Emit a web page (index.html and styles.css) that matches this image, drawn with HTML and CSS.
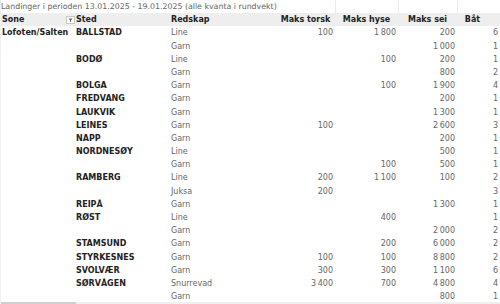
FILE: index.html
```html
<!DOCTYPE html>
<html lang="no">
<head>
<meta charset="utf-8">
<link rel="stylesheet" href="styles.css">
</head>
<body>
<div class="sheet">
  <div class="row title-row">
    <div class="cell title">Landinger i perioden 13.01.2025 - 19.01.2025 (alle kvanta i rundvekt)</div>
    <div class="cell sep"></div>
    <div class="cell sep"></div>
    <div class="cell sep"></div>
  </div>
  <div class="row head">
    <div class="cell h-sone">Sone <span class="filter"><svg width="9" height="8" viewBox="0 0 9 8"><rect x="0.5" y="0.5" width="8" height="7" fill="#fff" stroke="#c8c8c8"/><path d="M2.5 2.5h4L5 4.2V6.3L4 5.6V4.2z" fill="#666"/></svg></span></div>
    <div class="cell">Sted</div>
    <div class="cell">Redskap</div>
    <div class="cell c">Maks torsk</div>
    <div class="cell c">Maks hyse</div>
    <div class="cell c">Maks sei</div>
    <div class="cell c boat-h">Båt</div>
  </div>

  <div class="row"><div class="cell b">Lofoten/Salten</div><div class="cell b">BALLSTAD</div><div class="cell g">Line</div><div class="cell n">100</div><div class="cell n">1&#8239;800</div><div class="cell n">200</div><div class="cell n">6</div></div>
  <div class="row"><div class="cell"></div><div class="cell"></div><div class="cell g">Garn</div><div class="cell n"></div><div class="cell n"></div><div class="cell n">1&#8239;000</div><div class="cell n">1</div></div>
  <div class="row"><div class="cell"></div><div class="cell b">BODØ</div><div class="cell g">Line</div><div class="cell n"></div><div class="cell n">100</div><div class="cell n">200</div><div class="cell n">1</div></div>
  <div class="row"><div class="cell"></div><div class="cell"></div><div class="cell g">Garn</div><div class="cell n"></div><div class="cell n"></div><div class="cell n">800</div><div class="cell n">2</div></div>
  <div class="row"><div class="cell"></div><div class="cell b">BOLGA</div><div class="cell g">Garn</div><div class="cell n"></div><div class="cell n">100</div><div class="cell n">1&#8239;900</div><div class="cell n">4</div></div>
  <div class="row"><div class="cell"></div><div class="cell b">FREDVANG</div><div class="cell g">Garn</div><div class="cell n"></div><div class="cell n"></div><div class="cell n">200</div><div class="cell n">1</div></div>
  <div class="row"><div class="cell"></div><div class="cell b">LAUKVIK</div><div class="cell g">Garn</div><div class="cell n"></div><div class="cell n"></div><div class="cell n">1&#8239;300</div><div class="cell n">1</div></div>
  <div class="row"><div class="cell"></div><div class="cell b">LEINES</div><div class="cell g">Garn</div><div class="cell n">100</div><div class="cell n"></div><div class="cell n">2&#8239;600</div><div class="cell n">3</div></div>
  <div class="row"><div class="cell"></div><div class="cell b">NAPP</div><div class="cell g">Garn</div><div class="cell n"></div><div class="cell n"></div><div class="cell n">200</div><div class="cell n">1</div></div>
  <div class="row"><div class="cell"></div><div class="cell b">NORDNESØY</div><div class="cell g">Line</div><div class="cell n"></div><div class="cell n"></div><div class="cell n">500</div><div class="cell n">1</div></div>
  <div class="row"><div class="cell"></div><div class="cell"></div><div class="cell g">Garn</div><div class="cell n"></div><div class="cell n">100</div><div class="cell n">500</div><div class="cell n">1</div></div>
  <div class="row"><div class="cell"></div><div class="cell b">RAMBERG</div><div class="cell g">Line</div><div class="cell n">200</div><div class="cell n">1&#8239;100</div><div class="cell n">100</div><div class="cell n">2</div></div>
  <div class="row"><div class="cell"></div><div class="cell"></div><div class="cell g">Juksa</div><div class="cell n">200</div><div class="cell n"></div><div class="cell n"></div><div class="cell n">3</div></div>
  <div class="row"><div class="cell"></div><div class="cell b">REIPÅ</div><div class="cell g">Garn</div><div class="cell n"></div><div class="cell n"></div><div class="cell n">1&#8239;300</div><div class="cell n">1</div></div>
  <div class="row"><div class="cell"></div><div class="cell b">RØST</div><div class="cell g">Line</div><div class="cell n"></div><div class="cell n">400</div><div class="cell n"></div><div class="cell n">1</div></div>
  <div class="row"><div class="cell"></div><div class="cell"></div><div class="cell g">Garn</div><div class="cell n"></div><div class="cell n"></div><div class="cell n">2&#8239;000</div><div class="cell n">2</div></div>
  <div class="row"><div class="cell"></div><div class="cell b">STAMSUND</div><div class="cell g">Garn</div><div class="cell n"></div><div class="cell n">200</div><div class="cell n">6&#8239;000</div><div class="cell n">2</div></div>
  <div class="row"><div class="cell"></div><div class="cell b">STYRKESNES</div><div class="cell g">Garn</div><div class="cell n">100</div><div class="cell n">100</div><div class="cell n">8&#8239;800</div><div class="cell n">2</div></div>
  <div class="row"><div class="cell"></div><div class="cell b">SVOLVÆR</div><div class="cell g">Garn</div><div class="cell n">300</div><div class="cell n">300</div><div class="cell n">1&#8239;100</div><div class="cell n">6</div></div>
  <div class="row"><div class="cell"></div><div class="cell b">SØRVÅGEN</div><div class="cell g">Snurrevad</div><div class="cell n">3&#8239;400</div><div class="cell n">700</div><div class="cell n">4&#8239;800</div><div class="cell n">4</div></div>
  <div class="row"><div class="cell"></div><div class="cell"></div><div class="cell g">Garn</div><div class="cell n"></div><div class="cell n"></div><div class="cell n">800</div><div class="cell n">1</div></div>

  <div class="hscroll"><div class="thumb"></div></div>
</div>
</body>
</html>
```

FILE: styles.css
```css
html, body {
  margin: 0;
  padding: 0;
  background: #fff;
}
body {
  width: 500px;
  height: 304px;
  overflow: hidden;
  font-family: "DejaVu Sans", sans-serif;
  font-size: 8px;
  color: #555;
}
.sheet {
  position: relative;
  width: 500px;
  height: 304px;
  overflow: hidden;
  border-left: 1px solid #f0f0f0;
  box-sizing: border-box;
}
.row {
  display: grid;
  grid-template-columns: 74px 95px 106px 59px 63px 59px 43px;
  height: 13.2px;
}
.cell {
  display: flex;
  align-items: center;
  padding-left: 1px;
  white-space: nowrap;
  overflow: visible;
  line-height: 13.2px;
}
.title-row .title {
  grid-column: span 4;
  color: #666;
  font-size: 7.85px;
  padding-left: 0;
}
.title-row .sep {
  border-left: 1px solid #ececec;
}
.head {
  background: #eeeeee;
  color: #222;
  font-weight: bold;
}
.h-sone {
  justify-content: space-between;
  padding-right: 0;
}
.filter {
  display: flex;
  margin-top: 0;
}
.filter svg {
  display: block;
}
.head .c {
  justify-content: center;
  padding-left: 0;
}
.head .boat-h {
  padding-right: 12px;
}
.b {
  color: #222;
  font-weight: bold;
}
.g {
  color: #666;
}
.n {
  justify-content: flex-end;
  padding-right: 2px;
  color: #666;
}
.hscroll {
  position: absolute;
  left: 0;
  right: 0;
  bottom: 0;
  height: 2px;
  background: #f0f0f0;
}
.thumb {
  width: 75px;
  height: 2px;
  background: #cfcfcf;
}
```
